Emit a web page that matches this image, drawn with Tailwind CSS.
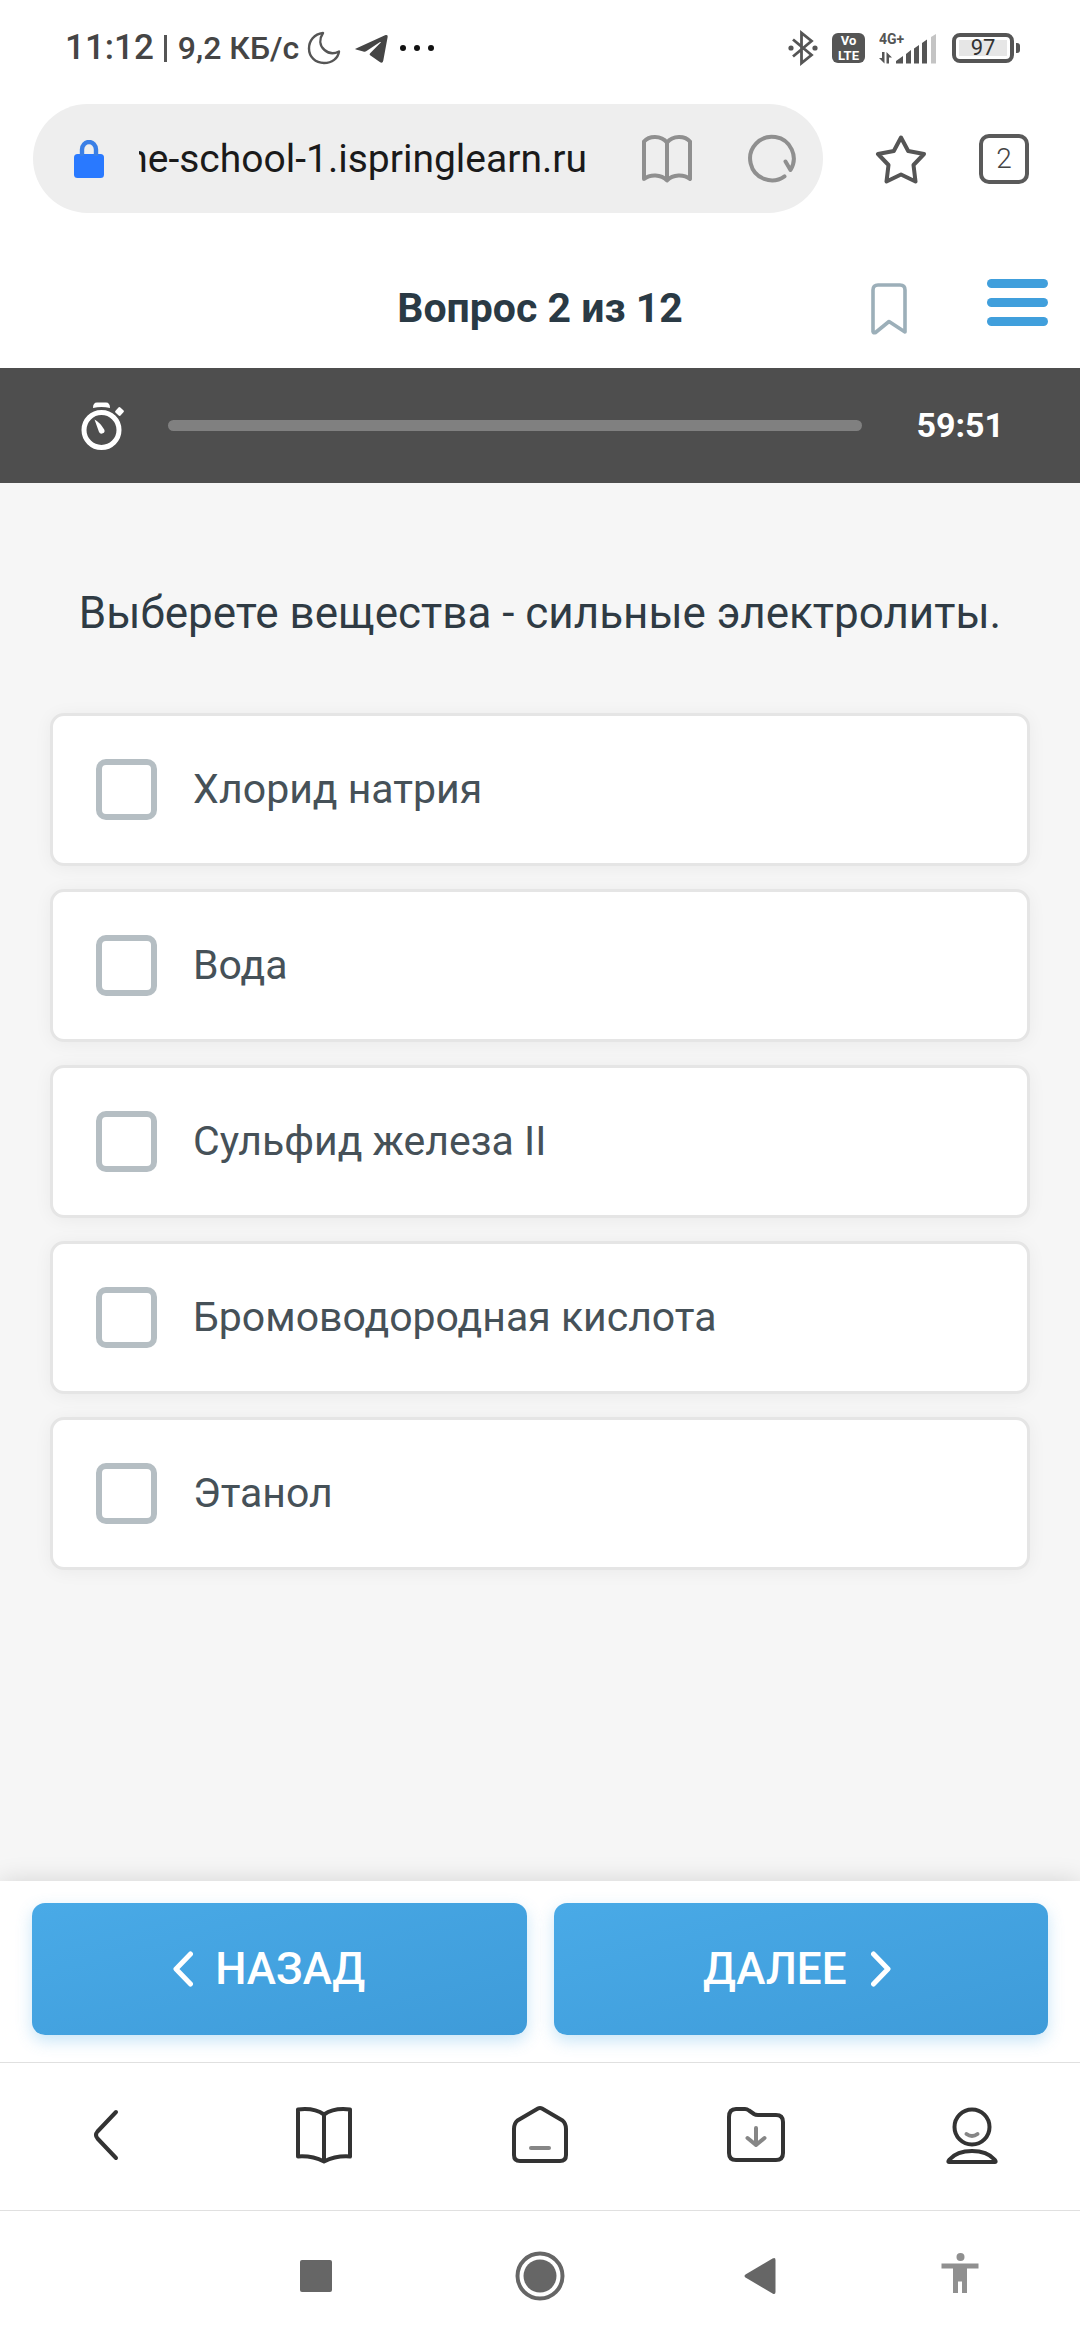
<!DOCTYPE html>
<html lang="ru">
<head>
    <meta charset="UTF-8">
    <title>Вопрос 2 из 12</title>
    <meta name="viewport" content="width=device-width, initial-scale=1.0">
    <script src="https://cdn.jsdelivr.net/npm/@tailwindcss/browser@4"></script>
</head>
<body class="flex min-h-screen flex-col bg-white font-[Roboto,sans-serif]">
    <!-- status bar -->
    <div class="flex h-24 items-center justify-between pl-[65px] pr-[60px] text-[#454545]">
        <div class="flex items-center">
            <span class="text-[35px] font-medium">11:12</span>
            <span class="ml-[10px] h-[27px] w-[3px] bg-[#555]"></span>
            <span class="ml-[11px] text-[32px] font-medium">9,2 КБ/с</span>
            <svg class="ml-2 h-[34px] w-[34px]" viewBox="0 0 34 34" fill="none" stroke="#555" stroke-width="2.4" stroke-linejoin="round"><path d="M16 2C7 3 2 10 2 17.500C2 26 8.500 32 17 32C25 32 31 27.500 32 20.500C27 23 21.500 22.500 17.500 19C12.500 14.500 12 8 16 2Z"/></svg>
            <svg class="ml-[13px] h-[34px] w-[34px]" viewBox="0 0 34 34" fill="#454545"><path d="M2 17.500L31 4.300C33 3.500 34 4.200 33.600 6.300L29.300 29.500C28.800 31.800 27.500 32.200 25.800 31L16.500 24.500C15.400 23.700 15.400 22.900 16.400 21.900L26.500 11.800C27.200 11 26.600 10.700 25.700 11.300L12.500 20C11.500 20.700 10.500 20.800 9.300 20.400L2 18.600C1 18.300 1 17.900 2 17.500Z"/></svg>
            <svg class="ml-3 h-[8px] w-[34px]" viewBox="0 0 34 8" fill="#111"><circle cx="3" cy="4" r="3"/><circle cx="17" cy="4" r="3"/><circle cx="31" cy="4" r="3"/></svg>
        </div>
        <div class="flex items-center">
            <svg class="h-[36px] w-[30px]" viewBox="0 0 30 36" fill="none" stroke="#555" stroke-width="2.8" stroke-linejoin="miter"><path d="M5 9.500L23.500 25L13.500 33V3L23.500 11L5 26.500"/><circle cx="3" cy="18" r="2.600" fill="#555" stroke="none"/><circle cx="27" cy="18" r="2.600" fill="#555" stroke="none"/></svg>
            <div class="ml-[14px] flex h-[30px] w-[33px] flex-col items-center justify-center rounded-[6px] bg-[#555] text-[13px] font-bold leading-[15px] text-white"><span>Vo</span><span>LTE</span></div>
            <svg class="ml-[14px] h-[32px] w-[57px]" viewBox="0 0 57 32" fill="#555">
                <text x="0" y="12" font-size="14" font-weight="700" font-family="Roboto, sans-serif">4G+</text>
                <path d="M17 31.500V29L24 24V31.500ZM27 31.500V22L32 18V31.500ZM35 31.500V16.500L40 13V31.500ZM43 31.500V11L48 7.500V31.500Z"/>
                <path fill="#c4c4c4" d="M52 31.500V5L57 2V31.500Z"/>
                <path d="M3 20H5.500V31.500L0 26H3ZM7.500 31.500V20L13 25.500H10V31.500Z"/>
            </svg>
            <div class="ml-4 flex h-[30px] w-[62px] items-center justify-center rounded-[8px] border-4 border-[#555] p-[3px]">
                <span class="flex h-full w-full items-center justify-center bg-[#e6e6e6] text-[22px] leading-[16px] text-[#333]">97</span>
            </div>
            <span class="ml-[2px] h-[10px] w-1 rounded-r-[3px] bg-[#555]"></span>
        </div>
    </div>

    <!-- browser toolbar -->
    <div class="flex items-center pt-2 pr-[51px] pl-[33px]">
        <div class="flex h-[109px] flex-1 items-center rounded-full bg-[#eee] pr-[27px] pl-[41px]">
            <svg class="h-[38px] w-[30px]" viewBox="0 0 30 38" fill="none"><rect x="0" y="14" width="30" height="24" rx="3.500" fill="#2979ff"/><path d="M8 16V9.500A7 7.500 0 0 1 22 9.500V16" stroke="#3a7fe6" stroke-width="4.400"/></svg>
            <input type="text" dir="rtl" aria-label="Адрес сайта" value="online-school-1.ispringlearn.ru" class="ml-[35px] h-[60px] w-[448px] min-w-0 text-[39px] text-[#1a1a1a] outline-none">
            <button type="button" aria-label="Режим чтения" class="ml-auto">
                <svg class="h-[50px] w-[50px]" viewBox="0 0 50 50" fill="none" stroke="#8f8f8f" stroke-width="4" stroke-linejoin="round"><path d="M25 8.500C19 1 7 1.500 2 7.500V45C8 40 19 40 25 46.500C31 40 42 40 48 45V7.500C43 1.500 31 1 25 8.500ZM25 8.500V46.500"/></svg>
            </button>
            <button type="button" aria-label="Обновить" class="ml-[56px]">
                <svg class="h-[50px] w-[48px]" viewBox="0 0 48 50" fill="none" stroke="#8f8f8f" stroke-width="4" stroke-linecap="round" stroke-linejoin="round"><path d="M36.500 42.400A21.800 21.800 0 1 1 42.500 36L37.500 27.500"/></svg>
            </button>
        </div>
        <button type="button" aria-label="В закладки" class="ml-[52px]">
            <svg class="h-[50px] w-[52px]" viewBox="0 0 52 50" fill="none" stroke="#555" stroke-width="4" stroke-linejoin="round"><path d="M26 3.500L33.200 17L49 20L38.500 31L40.500 47.500L26 40.500L11.500 47.500L13.500 31L3 20L18.800 17Z"/></svg>
        </button>
        <button type="button" aria-label="Вкладки" class="ml-[52px] flex h-[50px] w-[50px] items-center justify-center rounded-[10px] border-4 border-[#5a5a5a] text-[28px] font-light text-[#444]">2</button>
    </div>

    <!-- quiz header -->
    <header class="grid h-[155px] grid-cols-[1fr_auto_1fr] items-center px-8 pt-9">
        <span></span>
        <h1 class="text-[41px] font-bold text-[#2a3a45]">Вопрос 2 из 12</h1>
        <div class="flex items-center justify-end gap-20">
            <button type="button" aria-label="Отметить вопрос">
                <svg class="h-[52px] w-[36px]" viewBox="0 0 36 52" fill="none" stroke="#9cafb9" stroke-width="3.600" stroke-linejoin="round"><path d="M2 49V7Q2 2 7 2H29Q34 2 34 7V49L18 38.500L4.500 49.500Q2 50.500 2 48"/></svg>
            </button>
            <button type="button" aria-label="Меню">
                <svg class="h-[60px] w-[61px]" viewBox="0 0 61 60" fill="#409fdc"><rect width="61" height="9" rx="4.500"/><rect y="19" width="61" height="9" rx="4.500"/><rect y="38" width="61" height="9" rx="4.500"/></svg>
            </button>
        </div>
    </header>

    <!-- timer -->
    <div class="flex h-[115px] items-center bg-[#4e4e4e] pr-[76px] pl-20 text-white">
        <svg class="h-[50px] w-[44px]" viewBox="0 0 44 50" fill="none"><circle cx="21.500" cy="29" r="17.500" stroke="#fff" stroke-width="5"/><path fill="#fff" d="M13 7Q13 1.500 17 1.500H26Q30 1.500 30 7Q21.500 5 13 7ZM14.500 18.500Q20 21.500 24.200 28.500A2.800 2.800 0 0 1 19 31Z"/><rect x="36" y="7" width="7" height="7" rx="1.500" fill="#fff" transform="rotate(42 39.500 10.500)"/></svg>
        <div role="progressbar" aria-label="Время" class="ml-11 h-[11px] flex-1 rounded-full bg-[#808080]"></div>
        <span class="ml-[54px] text-[34px] font-bold">59:51</span>
    </div>

    <main class="flex-1 bg-[#f6f6f6] px-[50px] pt-[100px]">
        <h2 class="mb-[70px] text-center text-[44px] leading-[60px] text-[#2f3b44]">Выберете вещества - сильные электролиты.</h2>
        <div class="flex flex-col gap-[23px] text-[41px] text-[#465158]">
            <label class="flex h-[153px] items-center gap-9 rounded-[14px] border-[3px] border-[#e5e5e5] bg-white pl-[43px] shadow-[0_2px_18px_rgba(0,0,0,0.05)]">
                <input type="checkbox" class="h-[61px] w-[61px] appearance-none rounded-[10px] border-[6px] border-[#b5bec3]">Хлорид натрия
            </label>
            <label class="flex h-[153px] items-center gap-9 rounded-[14px] border-[3px] border-[#e5e5e5] bg-white pl-[43px] shadow-[0_2px_18px_rgba(0,0,0,0.05)]">
                <input type="checkbox" class="h-[61px] w-[61px] appearance-none rounded-[10px] border-[6px] border-[#b5bec3]">Вода
            </label>
            <label class="flex h-[153px] items-center gap-9 rounded-[14px] border-[3px] border-[#e5e5e5] bg-white pl-[43px] shadow-[0_2px_18px_rgba(0,0,0,0.05)]">
                <input type="checkbox" class="h-[61px] w-[61px] appearance-none rounded-[10px] border-[6px] border-[#b5bec3]">Сульфид железа II
            </label>
            <label class="flex h-[153px] items-center gap-9 rounded-[14px] border-[3px] border-[#e5e5e5] bg-white pl-[43px] shadow-[0_2px_18px_rgba(0,0,0,0.05)]">
                <input type="checkbox" class="h-[61px] w-[61px] appearance-none rounded-[10px] border-[6px] border-[#b5bec3]">Бромоводородная кислота
            </label>
            <label class="flex h-[153px] items-center gap-9 rounded-[14px] border-[3px] border-[#e5e5e5] bg-white pl-[43px] shadow-[0_2px_18px_rgba(0,0,0,0.05)]">
                <input type="checkbox" class="h-[61px] w-[61px] appearance-none rounded-[10px] border-[6px] border-[#b5bec3]">Этанол
            </label>
        </div>
    </main>

    <!-- previous / next -->
    <footer class="grid grid-cols-2 gap-[27px] bg-white px-8 pt-[22px] pb-[27px] text-[44px] font-medium text-white shadow-[0_0_24px_rgba(0,0,0,0.14)]">
        <button type="button" class="flex h-[132px] items-center justify-center gap-[22px] rounded-[13px] bg-linear-to-br from-[#49aae7] to-[#3e9bd9] pr-5 shadow-[0_6px_16px_rgba(72,169,230,0.3)]">
            <svg class="h-[36px] w-[20px]" viewBox="0 0 20 36" fill="none" stroke="#fff" stroke-width="5" stroke-linecap="round" stroke-linejoin="round"><path d="M17.500 3L3 18L17.500 33"/></svg>
            НАЗАД
        </button>
        <button type="button" class="flex h-[132px] items-center justify-center gap-6 rounded-[13px] bg-linear-to-br from-[#49aae7] to-[#3e9bd9] pr-2 shadow-[0_6px_16px_rgba(72,169,230,0.3)]">
            ДАЛЕЕ
            <svg class="h-[36px] w-[20px]" viewBox="0 0 20 36" fill="none" stroke="#fff" stroke-width="5" stroke-linecap="round" stroke-linejoin="round"><path d="M2.500 3L17 18L2.500 33"/></svg>
        </button>
    </footer>

    <!-- browser navigation -->
    <nav class="relative grid h-[148px] grid-cols-5 place-items-center border-t border-[#e0e0e0] bg-white pb-[3px]">
        <button type="button" aria-label="Назад">
            <svg class="h-[60px] w-[60px]" viewBox="0 0 60 60" fill="none" stroke="#333" stroke-width="4" stroke-linecap="round" stroke-linejoin="round"><path d="M38 7L19.500 26.500Q16.500 30 19.500 33.500L38 53"/></svg>
        </button>
        <button type="button" aria-label="Книги">
            <svg class="h-[60px] w-[60px]" viewBox="0 0 60 60" fill="none" stroke="#333" stroke-width="4" stroke-linejoin="round"><path d="M30 9.500Q20 2.500 4 4.500V51.500Q18 50.500 30 56.500Q42 50.500 56 51.500V4.500Q40 2.500 30 9.500ZM30 9.500V56.500"/></svg>
        </button>
        <button type="button" aria-label="Домой">
            <svg class="h-[60px] w-[60px]" viewBox="0 0 60 60" fill="none" stroke="#333" stroke-width="4" stroke-linecap="round" stroke-linejoin="round"><path d="M28 3.500Q30 2.300 32 3.500L52.500 15.500Q56 18.500 56 24V50Q56 56 50 56H10Q4 56 4 50V24Q4 18.500 7.500 15.500Z"/><path stroke="#868686" d="M21 43H39"/></svg>
        </button>
        <button type="button" aria-label="Загрузки">
            <svg class="h-[60px] w-[60px]" viewBox="0 0 60 60" fill="none" stroke="#333" stroke-width="4" stroke-linecap="round" stroke-linejoin="round"><path d="M3 12Q3 4 10 4H19Q21 4 23 5.500L28 9Q29.500 10 32 10H50Q57 10 57 17V48Q57 55 50 55H10Q3 55 3 48Z"/><path stroke="#868686" d="M30 23V40M21.500 33L30 40L38.500 33"/></svg>
        </button>
        <button type="button" aria-label="Профиль">
            <svg class="h-[60px] w-[60px]" viewBox="0 0 60 60" fill="none" stroke="#333" stroke-width="4" stroke-linecap="round" stroke-linejoin="round"><circle cx="30" cy="22" r="17.500"/><path d="M7 57Q5.500 57 7.500 54.500Q15 46 30 46Q45 46 52.500 54.500Q54.500 57 53 57Z"/><path stroke="#868686" d="M24.500 29Q30 33 35.500 29"/></svg>
        </button>
    </nav>

    <!-- system navigation -->
    <nav class="relative grid h-[130px] grid-cols-[204fr_224fr_224fr_216fr_184fr_28fr] place-items-center border-t border-[#e0e0e0] bg-white">
        <span></span>
        <button type="button" aria-label="Недавние приложения">
            <svg class="h-[32px] w-[32px]" viewBox="0 0 32 32" fill="#666"><rect width="32" height="32" rx="2"/></svg>
        </button>
        <button type="button" aria-label="Главный экран">
            <svg class="h-[50px] w-[50px]" viewBox="0 0 50 50" fill="none"><circle cx="25" cy="25" r="22.500" stroke="#666" stroke-width="4"/><circle cx="25" cy="25" r="16.500" fill="#666"/></svg>
        </button>
        <button type="button" aria-label="Назад">
            <svg class="h-[38px] w-[32px]" viewBox="0 0 32 38" fill="#666"><path d="M1.500 17.500L28.500 1.500Q31.500 0 31.500 3V35Q31.500 38 28.500 36.500L1.500 20.500Q-.5 19 1.500 17.500Z"/></svg>
        </button>
        <button type="button" aria-label="Специальные возможности">
            <svg class="h-[46px] w-[38px]" viewBox="0 0 38 46" fill="#909090"><circle cx="19.500" cy="4" r="4"/><path d="M.5 10.500H37.500V15.500H26V40H21V28.500H17V40H12V15.500H.5Z"/></svg>
        </button>
    </nav>
</body>
</html>
